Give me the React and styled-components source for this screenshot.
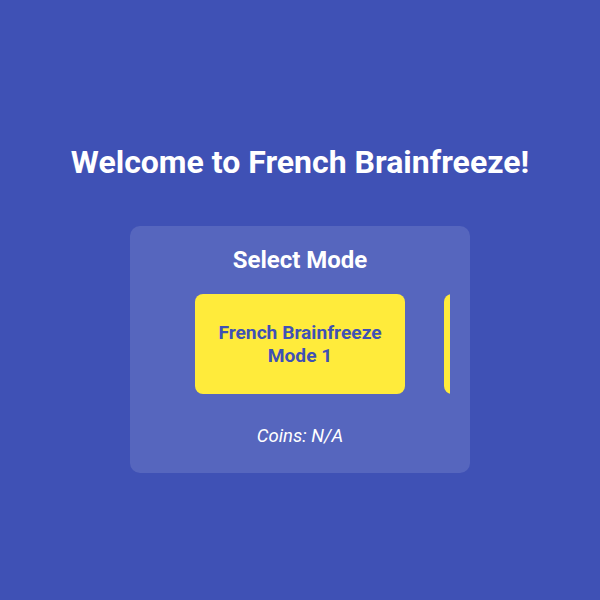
import React from "react";
import styled, { createGlobalStyle } from "styled-components";

const Global = createGlobalStyle`
  html, body { margin: 0; padding: 0; }
  body {
    background: #3f51b5;
    font-family: Roboto, "Liberation Sans", sans-serif;
    color: #ffffff;
  }
`;

const Page = styled.div`
  width: 600px;
  height: 600px;
  display: flex;
  flex-direction: column;
  align-items: center;
  padding-top: 142px;
  box-sizing: border-box;
`;

const Title = styled.h1`
  margin: 0 0 44px;
  font-size: 32px;
  font-weight: 700;
  line-height: 40px;
  color: #ffffff;
`;

const Panel = styled.div`
  width: 340px;
  height: 247px;
  box-sizing: border-box;
  background: rgba(255, 255, 255, 0.12);
  border-radius: 10px;
  display: flex;
  flex-direction: column;
  align-items: center;
  padding-top: 20px;
`;

const PanelTitle = styled.h2`
  margin: 0 0 20px;
  font-size: 24px;
  font-weight: 700;
  line-height: 28px;
`;

const Viewport = styled.div`
  width: 300px;
  overflow: hidden;
`;

const Track = styled.div`
  display: flex;
  gap: 39px;
  padding-left: 45px;
`;

const ModeCard = styled.button`
  flex: 0 0 210px;
  height: 100px;
  border: none;
  border-radius: 8px;
  background: #ffeb3b;
  color: #3f51b5;
  font-family: Roboto, "Liberation Sans", sans-serif;
  font-size: 19.2px;
  font-weight: 700;
  line-height: 23px;
  display: flex;
  align-items: center;
  justify-content: center;
  text-align: center;
  padding: 0 12px;
`;

const Coins = styled.p`
  margin: 31px 0 0;
  font-size: 18.5px;
  font-style: italic;
  line-height: 22px;
  color: #ffffff;
`;

export default function App() {
  return (
    <>
      <Global />
      <Page>
        <Title>Welcome to French Brainfreeze!</Title>
        <Panel>
          <PanelTitle>Select Mode</PanelTitle>
          <Viewport>
            <Track>
              <ModeCard>French Brainfreeze Mode 1</ModeCard>
              <ModeCard>French Brainfreeze Mode 2</ModeCard>
            </Track>
          </Viewport>
          <Coins>Coins: N/A</Coins>
        </Panel>
      </Page>
    </>
  );
}
